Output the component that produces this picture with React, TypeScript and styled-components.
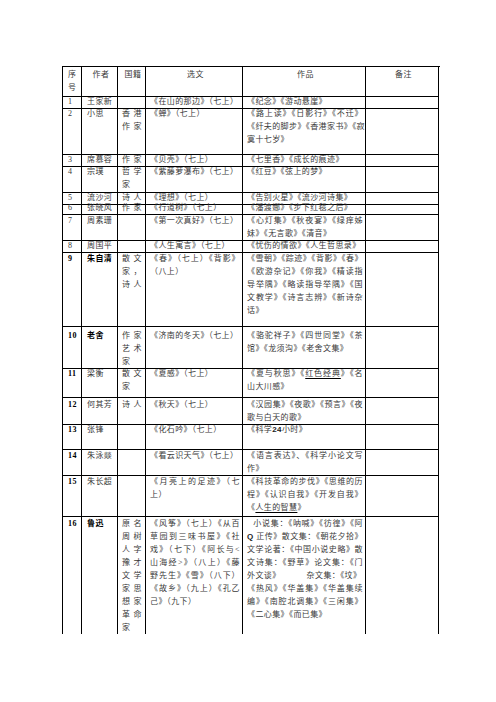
import React from 'react'
import styled, { createGlobalStyle } from 'styled-components'

type Line = React.ReactNode | { free: React.ReactNode }

interface RowData {
  h: number
  shift: number
  no: string
  author: string
  strong?: boolean
  boldNo?: boolean
  nation?: Line[]
  pick?: Line[]
  works?: Line[]
}

const GlobalStyle = createGlobalStyle`
  html, body {
    margin: 0;
    padding: 0;
    background: #ffffff;
  }
  body {
    font-family: "Liberation Serif", "Noto Sans CJK SC", serif;
    color: #333333;
  }
`

const Page = styled.main`
  padding: 66px 0 0 62px;
  min-height: 702px;
  box-sizing: border-box;
`

const Table = styled.section`
  width: 378px;
  box-sizing: border-box;
  border-left: 1px solid #000;
  border-top: 1px solid #000;
  display: flex;
  flex-direction: column;
`

const Row = styled.div<{ $h: number }>`
  display: grid;
  grid-template-columns: 19px 36px 28px 97px 123px 73px;
  height: ${({ $h }) => $h}px;
`

const Cell = styled.div<{ $last?: boolean }>`
  box-sizing: border-box;
  border-right: 1px solid #000;
  border-bottom: ${({ $last }) => ($last ? '0' : '1px solid #000')};
  min-width: 0;
  overflow: visible;
`

const CellText = styled.div<{
  $shift: number
  $center?: boolean
  $strong?: boolean
  $tight?: boolean
  $wide?: boolean
}>`
  margin-top: ${({ $shift }) => $shift}px;
  padding: ${({ $tight, $wide }) => ($tight ? '0 3px 0 4px' : $wide ? '0 2px 0 4px' : '0 2px 0 5px')};
  font-size: 8px;
  letter-spacing: 0.4px;
  line-height: 13px;
  white-space: nowrap;
  text-align: ${({ $center }) => ($center ? 'center' : 'left')};
  font-weight: ${({ $strong }) => ($strong ? 700 : 400)};
  color: ${({ $strong }) => ($strong ? '#000' : '#3a3a3a')};
`

const TextLine = styled.div<{ $justify?: boolean }>`
  white-space: nowrap;
  text-align: ${({ $justify }) => ($justify ? 'justify' : 'left')};
  text-align-last: ${({ $justify }) => ($justify ? 'justify' : 'auto')};
`

const Under = styled.span`
  text-decoration: underline;
  text-decoration-color: #000;
  text-underline-offset: 2px;
`

const Latin = styled.span`
  font-family: "Liberation Sans", sans-serif;
  font-weight: 700;
  color: #222;
`

const Indent = styled.span`
  display: inline-block;
  width: 6px;
`

const Gap = styled.span`
  display: inline-block;
  width: 26px;
`

const rows: RowData[] = [
  { h: 9, shift: -2, no: '1', author: '王家新', pick: ['《在山的那边》（七上）'], works: ['《纪念》《游动悬崖》'] },
  {
    h: 49,
    shift: 1,
    no: '2',
    author: '小思',
    nation: ['香港', '作家'],
    pick: ['《蝉》（七上）'],
    works: ['《路上读》《日影行》《不迁》', '《纤夫的脚步》《香港家书》《寂', '寞十七岁》'],
  },
  { h: 9, shift: -2, no: '3', author: '席慕容', nation: ['作家'], pick: ['《贝壳》（七上）'], works: ['《七里香》《成长的痕迹》'] },
  { h: 29, shift: 1, no: '4', author: '宗璞', nation: ['哲学', '家'], pick: ['《紫藤萝瀑布》（七上）'], works: ['《红豆》《弦上的梦》'] },
  { h: 9, shift: -2, no: '5', author: '流沙河', nation: ['诗人'], pick: ['《理想》（七上）'], works: ['《告别火星》《流沙河诗集》'] },
  { h: 10, shift: -1.5, no: '6', author: '张晓风', nation: ['作家'], pick: ['《行道树》（七上）'], works: ['《潘渡娜》《步下红毯之后》'] },
  {
    h: 29,
    shift: 1.5,
    no: '7',
    author: '周素珊',
    pick: ['《第一次真好》（七上）'],
    works: ['《心灯集》《秋夜宴》《绿痒姊', '妹》《无言歌》《清音》'],
  },
  { h: 9, shift: -2, no: '8', author: '周国平', pick: ['《人生寓言》（七上）'], works: ['《忧伤的情欲》《人生哲思录》'] },
  {
    h: 77,
    shift: 2,
    no: '9',
    author: '朱自清',
    strong: true,
    boldNo: true,
    nation: ['散文', '家，', '诗人'],
    pick: ['《春》（七上）《背影》', '（八上）'],
    works: [
      '《雪朝》《踪迹》《背影》《春》',
      '《欧游杂记》《你我》《精读指',
      '导举隅》《略读指导举隅》《国',
      '文教学》《诗言志辨》《新诗杂',
      '话》',
    ],
  },
  {
    h: 39,
    shift: 2,
    no: '10',
    author: '老舍',
    strong: true,
    boldNo: true,
    nation: ['作家', '艺术', '家'],
    pick: ['《济南的冬天》（七上）'],
    works: ['《骆驼祥子》《四世同堂》《茶', '馆》《龙须沟》《老舍文集》'],
  },
  {
    h: 32,
    shift: 1,
    no: '11',
    author: '梁衡',
    boldNo: true,
    nation: ['散文', '家'],
    pick: ['《夏感》（七上）'],
    works: [
      <>
        《夏与秋思》《<Under>红色经典</Under>》《名
      </>,
      '山大川感》',
    ],
  },
  {
    h: 26,
    shift: -0.5,
    no: '12',
    author: '何其芳',
    boldNo: true,
    nation: ['诗人'],
    pick: ['《秋天》（七上）'],
    works: ['《汉园集》《夜歌》《预言》《夜', '歌与白天的歌》'],
  },
  {
    h: 26,
    shift: -1.5,
    no: '13',
    author: '张锋',
    boldNo: true,
    pick: ['《化石吟》（七上）'],
    works: [
      <>
        《科学<Latin>24</Latin>小时》
      </>,
    ],
  },
  {
    h: 26,
    shift: -1.5,
    no: '14',
    author: '朱泳燚',
    boldNo: true,
    pick: ['《看云识天气》（七上）'],
    works: ['《语言表达》、《科学小论文写', '作》'],
  },
  {
    h: 41,
    shift: -1,
    no: '15',
    author: '朱长超',
    boldNo: true,
    pick: ['《月亮上的足迹》（七', '上）'],
    works: [
      '《科技革命的步伐》《思维的历',
      '程》《认识自我》《开发自我》',
      <>
        《<Under>人生的智慧</Under>》
      </>,
    ],
  },
  {
    h: 117,
    shift: 0,
    no: '16',
    author: '鲁迅',
    strong: true,
    boldNo: true,
    nation: ['原名', '周树', '人字', '豫才', '文学', '家思', '想家', '革命', '家'],
    pick: [
      '《风筝》（七上）《从百',
      '草园到三味书屋》《社',
      '戏》（七下）《阿长与<',
      '山海经>》（八上）《藤',
      '野先生》《雪》（八下）',
      '《故乡》（九上）《孔乙',
      '己》（九下）',
    ],
    works: [
      <>
        <Indent />
        小说集：《呐喊》《彷徨》《阿
      </>,
      <>
        <Latin>Q</Latin> 正传》散文集：《朝花夕拾》
      </>,
      '文学论著：《中国小说史略》散',
      '文诗集：《野草》论文集：《门',
      {
        free: (
          <>
            外文谈》
            <Gap />
            杂文集：《坟》
          </>
        ),
      },
      '《热风》《华盖集》《华盖集续',
      '编》《南腔北调集》《三闲集》',
      '《二心集》《而已集》',
    ],
  },
]

function isFree(line: Line): line is { free: React.ReactNode } {
  return typeof line === 'object' && line !== null && !React.isValidElement(line) && 'free' in line
}

function Lines({ lines, spread }: { lines?: Line[]; spread?: boolean }) {
  if (!lines) return null
  return (
    <>
      {lines.map((line, i) =>
        isFree(line) ? (
          <TextLine key={i}>{line.free}</TextLine>
        ) : (
          <TextLine key={i} $justify={spread || i < lines.length - 1}>
            {line as React.ReactNode}
          </TextLine>
        ),
      )}
    </>
  )
}

const headers = ['作者', '国籍', '选文', '作品', '备注']

export default function App() {
  return (
    <Page>
      <GlobalStyle />
      <Table>
        <Row $h={30}>
          <Cell>
            <CellText $shift={1}>
              <TextLine>序</TextLine>
              <TextLine>号</TextLine>
            </CellText>
          </Cell>
          {headers.map((title) => (
            <Cell key={title}>
              <CellText $shift={1} $center>
                {title}
              </CellText>
            </Cell>
          ))}
        </Row>

        {rows.map((row, idx) => {
          const last = idx === rows.length - 1
          return (
            <Row key={row.no} $h={row.h}>
              <Cell $last={last}>
                <CellText $shift={row.shift} $strong={row.boldNo}>
                  {row.no}
                </CellText>
              </Cell>
              <Cell $last={last}>
                <CellText $shift={row.shift} $strong={row.strong}>
                  {row.author}
                </CellText>
              </Cell>
              <Cell $last={last}>
                <CellText $shift={row.shift} $tight>
                  <Lines lines={row.nation} spread />
                </CellText>
              </Cell>
              <Cell $last={last}>
                <CellText $shift={row.shift} $wide>
                  <Lines lines={row.pick} />
                </CellText>
              </Cell>
              <Cell $last={last}>
                <CellText $shift={row.shift} $wide>
                  <Lines lines={row.works} />
                </CellText>
              </Cell>
              <Cell $last={last} />
            </Row>
          )
        })}
      </Table>
    </Page>
  )
}
